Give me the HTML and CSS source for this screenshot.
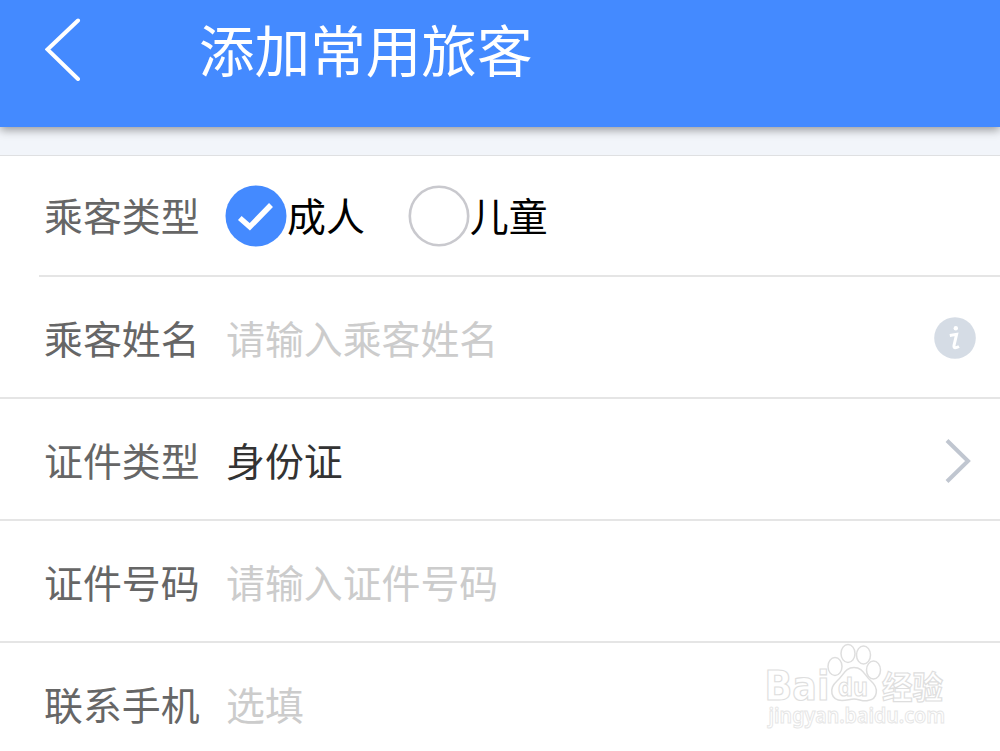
FILE: index.html
```html
<!DOCTYPE html>
<html lang="zh-CN">
<head>
    <meta charset="UTF-8">
    <meta name="viewport" content="width=device-width, initial-scale=1.0">
    <title>添加常用旅客</title>
    <link rel="stylesheet" href="styles.css">
</head>
<body>
    <header>
        <svg class="back" width="36" height="64" viewBox="0 0 36 64">
            <path d="M33 3.500L2.500 32.500L33 62"/>
        </svg>
        <h1>添加常用旅客</h1>
    </header>

    <main class="form">
        <div class="row row-type">
            <span class="label">乘客类型</span>
            <div class="option">
                <svg class="radio" width="62" height="62" viewBox="0 0 62 62">
                    <circle class="radio-on" cx="31" cy="31" r="30.500"/>
                    <path class="check" d="M14.800 33L24.800 41.800L46 20"/>
                </svg>
                <span>成人</span>
            </div>
            <div class="option">
                <svg class="radio" width="62" height="62" viewBox="0 0 62 62">
                    <circle class="radio-off" cx="31" cy="31" r="29.200"/>
                </svg>
                <span>儿童</span>
            </div>
        </div>
        <div class="row">
            <span class="label">乘客姓名</span>
            <span class="placeholder">请输入乘客姓名</span>
            <svg class="info" width="42" height="42" viewBox="0 0 42 42">
                <circle class="info-bg" cx="21" cy="21" r="20.800"/>
                <circle class="info-dot" cx="21.800" cy="11.300" r="2.200"/>
                <path class="info-stem" d="M15.800 18.500L22.600 17.300L20 28.500Q19.500 32.500 25 29.500"/>
            </svg>
        </div>
        <div class="row">
            <span class="label">证件类型</span>
            <span class="value">身份证</span>
            <svg class="arrow" width="28" height="46" viewBox="0 0 28 46">
                <path d="M3 2.500L24 23L3 43.500"/>
            </svg>
        </div>
        <div class="row">
            <span class="label">证件号码</span>
            <span class="placeholder">请输入证件号码</span>
        </div>
        <div class="row">
            <span class="label">联系手机</span>
            <span class="placeholder">选填</span>
        </div>
    </main>

    <div class="watermark">
        <svg width="200" height="90" viewBox="0 0 200 90">
            <g class="paw">
                <ellipse cx="85" cy="22.500" rx="7" ry="9"/>
                <ellipse cx="98" cy="9.500" rx="7" ry="9"/>
                <ellipse cx="113.500" cy="11" rx="7" ry="9"/>
                <ellipse cx="123.500" cy="26" rx="7" ry="9"/>
                <path d="M104 23.500C95 23.500 94 31 87 37C78 45 81 56.500 92 56.500C97 56.500 100 55 104 55C109 55 113 58 118 56.500C128 55 129 44 121 37C114 31 113 23.500 104 23.500Z"/>
            </g>
            <text class="wm-latin" x="14.500" y="55.500" textLength="65" lengthAdjust="spacingAndGlyphs">Bai</text>
            <text class="wm-du" x="88" y="51.500" textLength="30" lengthAdjust="spacingAndGlyphs">du</text>
            <text class="wm-cjk" x="132" y="55" textLength="61" lengthAdjust="spacingAndGlyphs">经验</text>
            <text class="wm-url" x="18.500" y="79" textLength="176.500" lengthAdjust="spacingAndGlyphs">jingyan.baidu.com</text>
        </svg>
    </div>
</body>
</html>
```
FILE: styles.css
```css
body {
    margin: 0;
    height: 751px;
    overflow: hidden;
    background-color: #f2f5fa;
    font-family: "Noto Sans CJK SC", sans-serif;
    position: relative;
}

header {
    display: flex;
    align-items: flex-start;
    height: 127px;
    box-sizing: border-box;
    padding: 17px 0 0 45px;
    background-color: #448aff;
    box-shadow: 0 3px 9px rgba(0, 0, 0, 0.38);
}

.back {
    fill: none;
    stroke: #fff;
    stroke-width: 4;
    stroke-linecap: round;
}

h1 {
    margin: 0 0 0 118px;
    color: #fff;
    font-size: 55.6px;
    font-weight: 400;
    line-height: 63px;
}

.form {
    margin-top: 28px;
    border-top: 1px solid #dfe0e2;
    background-color: #fff;
}

.row {
    display: flex;
    align-items: center;
    height: 122px;
    box-sizing: border-box;
    padding: 0 24px 0 44px;
    border-bottom: 2px solid #e5e5e5;
    font-size: 38.9px;
    line-height: 58px;
}

.row-type {
    height: 121px;
    margin-left: 39px;
    padding-left: 5px;
}

/* keeps the text level with the radio circles */
.row-type span {
    padding-bottom: 3px;
}

.label {
    width: 182px;
    color: #666;
}

.row-type .label {
    width: 181px;
}

.placeholder {
    color: #ccc;
}

.value {
    color: #333;
}

.option {
    display: flex;
    align-items: center;
    margin-right: 43px;
    color: #000;
}

.radio-on {
    fill: #448aff;
}

.radio-off {
    fill: #fff;
    stroke: #c9c9ce;
    stroke-width: 2.6;
}

.check {
    fill: none;
    stroke: #fff;
    stroke-width: 5.5;
}

.info,
.arrow {
    margin-top: 2px;
    margin-left: auto;
}

.info-bg {
    fill: #d5dce5;
}

.info-dot {
    fill: #fff;
}

.info-stem {
    fill: none;
    stroke: #fff;
    stroke-width: 3;
}

.arrow {
    margin-top: 3px;
    margin-right: 4px;
    fill: none;
    stroke: #c0c6d0;
    stroke-width: 4;
}

/* watermark lies over the last row */
.watermark {
    position: absolute;
    left: 750px;
    top: 644px;
}

.watermark svg {
    display: block;
    overflow: visible;
}

.paw,
.watermark text {
    fill: #fff;
    stroke: #dedede;
    stroke-width: 1.5;
}

.watermark text {
    stroke-width: 1.2;
}

.wm-latin {
    font: bold 40px "DejaVu Sans", sans-serif;
}

.wm-du {
    font: bold 25px "DejaVu Sans", sans-serif;
}

.wm-cjk {
    font: bold 32px "Noto Sans CJK SC", sans-serif;
}

.watermark .wm-url {
    font: 600 21px "Noto Sans", sans-serif;
    stroke: #e6e6e6;
    stroke-width: 1;
}
```
